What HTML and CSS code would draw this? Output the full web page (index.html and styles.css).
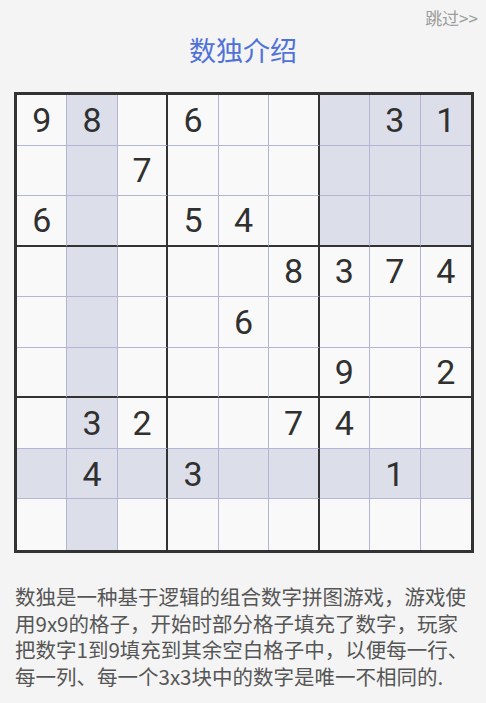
FILE: index.html
```html
<!DOCTYPE html>
<html lang="zh-CN">
<head>
<meta charset="utf-8">
<title>数独介绍</title>
<link rel="stylesheet" href="styles.css">
</head>
<body>
<div class="page">
  <div class="topbar"><span class="skip">跳过&gt;&gt;</span></div>
  <h1 class="title">数独介绍</h1>
  <div class="board">
    <div class="cell">9</div><div class="cell hl">8</div><div class="cell"></div><div class="cell">6</div><div class="cell"></div><div class="cell"></div><div class="cell hl"></div><div class="cell hl">3</div><div class="cell hl">1</div>
    <div class="cell"></div><div class="cell hl"></div><div class="cell">7</div><div class="cell"></div><div class="cell"></div><div class="cell"></div><div class="cell hl"></div><div class="cell hl"></div><div class="cell hl"></div>
    <div class="cell">6</div><div class="cell hl"></div><div class="cell"></div><div class="cell">5</div><div class="cell">4</div><div class="cell"></div><div class="cell hl"></div><div class="cell hl"></div><div class="cell hl"></div>
    <div class="cell"></div><div class="cell hl"></div><div class="cell"></div><div class="cell"></div><div class="cell"></div><div class="cell">8</div><div class="cell">3</div><div class="cell">7</div><div class="cell">4</div>
    <div class="cell"></div><div class="cell hl"></div><div class="cell"></div><div class="cell"></div><div class="cell">6</div><div class="cell"></div><div class="cell"></div><div class="cell"></div><div class="cell"></div>
    <div class="cell"></div><div class="cell hl"></div><div class="cell"></div><div class="cell"></div><div class="cell"></div><div class="cell"></div><div class="cell">9</div><div class="cell"></div><div class="cell">2</div>
    <div class="cell"></div><div class="cell hl">3</div><div class="cell">2</div><div class="cell"></div><div class="cell"></div><div class="cell">7</div><div class="cell">4</div><div class="cell"></div><div class="cell"></div>
    <div class="cell hl"></div><div class="cell hl">4</div><div class="cell hl"></div><div class="cell hl">3</div><div class="cell hl"></div><div class="cell hl"></div><div class="cell hl"></div><div class="cell hl">1</div><div class="cell hl"></div>
    <div class="cell"></div><div class="cell hl"></div><div class="cell"></div><div class="cell"></div><div class="cell"></div><div class="cell"></div><div class="cell"></div><div class="cell"></div><div class="cell"></div>
  </div>
  <p class="desc">数独是一种基于逻辑的组合数字拼图游戏，游戏使<br>用9x9的格子，开始时部分格子填充了数字，玩家<br>把数字1到9填充到其余空白格子中，以便每一行、<br>每一列、每一个3x3块中的数字是唯一不相同的.</p>
</div>
</body>
</html>
```
FILE: styles.css
```css
html, body {
  margin: 0;
  padding: 0;
  background: #f4f4f4;
}
body {
  font-family: "Noto Sans CJK SC", "Noto Sans", sans-serif;
  width: 486px;
  height: 703px;
  overflow: hidden;
}
.page {
  display: flex;
  flex-direction: column;
}
.topbar {
  display: flex;
  justify-content: flex-end;
  padding: 6px 8px 0 0;
  height: 22px;
}
.skip {
  font-size: 17px;
  line-height: 24px;
  color: #9b9b9b;
}
.title {
  margin: 4px 0 0 0;
  text-align: center;
  font-size: 27px;
  line-height: 36px;
  font-weight: normal;
  color: #4f72d8;
}
.board {
  box-sizing: border-box;
  margin: 24px 0 0 14px;
  width: 460px;
  height: 461px;
  border: 3px solid #333333;
  display: grid;
  grid-template-columns: repeat(9, 1fr);
  grid-template-rows: repeat(9, 1fr);
}
.cell {
  box-sizing: border-box;
  background: #f9f9f9;
  border-right: 1px solid #b2b6d4;
  border-bottom: 1px solid #b2b6d4;
  display: flex;
  align-items: center;
  justify-content: center;
  font-family: Roboto, "Noto Sans", sans-serif;
  font-size: 34px;
  color: #303030;
}
.cell.hl {
  background: #dcdfea;
}
.cell:nth-child(9n+3),
.cell:nth-child(9n+6) {
  border-right: 2px solid #333333;
}
.cell:nth-child(9n) {
  border-right: none;
}
.cell:nth-child(n+19):nth-child(-n+27),
.cell:nth-child(n+46):nth-child(-n+54) {
  border-bottom: 2px solid #333333;
}
.cell:nth-child(n+73) {
  border-bottom: none;
}
.desc {
  margin: 30px 0 0 15px;
  font-size: 20.5px;
  line-height: 26.7px;
  color: #565656;
  white-space: nowrap;
}
```
